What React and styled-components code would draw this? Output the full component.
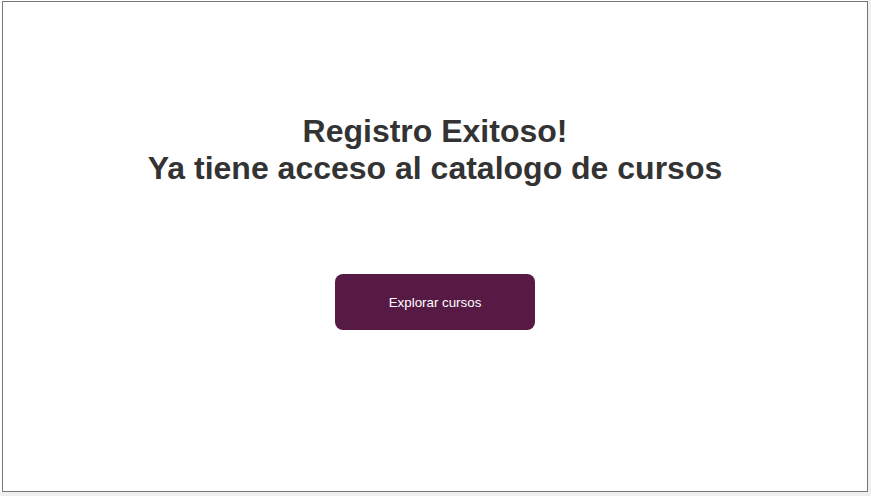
import React from "react";
import styled, { createGlobalStyle } from "styled-components";

const GlobalStyle = createGlobalStyle`
  html, body {
    margin: 0;
    padding: 0;
    background: #f0f0f0;
  }
  body {
    font-family: "Liberation Sans", Arial, sans-serif;
  }
`;

const Page = styled.div`
  width: 868px;
  height: 492px;
  padding: 1px 0 0 2px;
  box-sizing: border-box;
  background: #ffffff;
`;

const Frame = styled.div`
  width: 866px;
  height: 491px;
  box-sizing: border-box;
  border: 1px solid #767676;
  background: #ffffff;
  display: flex;
  flex-direction: column;
  align-items: center;
  padding-top: 111px;
`;

const Title = styled.h1`
  margin: 0;
  font-size: 32px;
  font-weight: 700;
  color: #333333;
  text-align: center;
`;

const ExploreButton = styled.button`
  margin-top: 87px;
  width: 200px;
  height: 56px;
  border: none;
  border-radius: 8px;
  background: #561a45;
  color: #ffffff;
  font-family: "Liberation Sans", Arial, sans-serif;
  font-size: 13.33px;
  cursor: pointer;
`;

const App = () => {
  return (
    <>
      <GlobalStyle />
      <Page>
        <Frame>
          <Title>
            Registro Exitoso!
            <br />
            Ya tiene acceso al catalogo de cursos
          </Title>
          <ExploreButton>Explorar cursos</ExploreButton>
        </Frame>
      </Page>
    </>
  );
};

export default App;
